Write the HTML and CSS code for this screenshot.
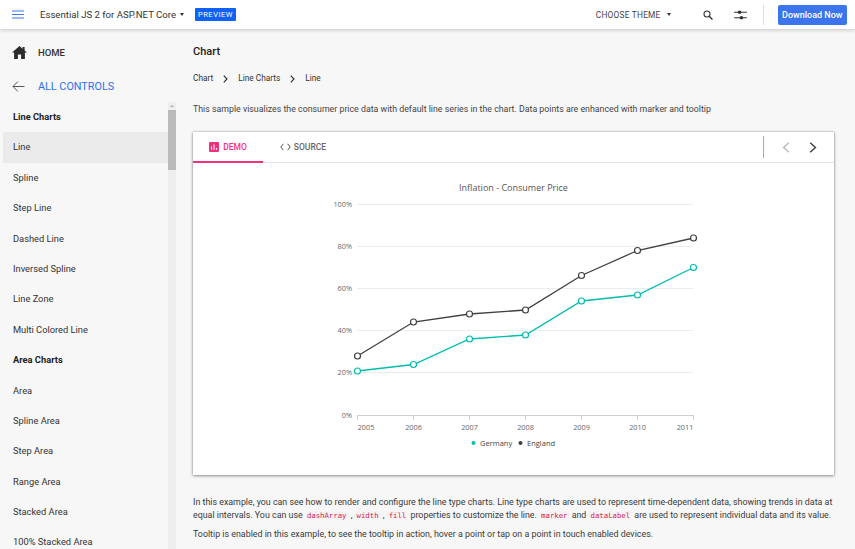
FILE: index.html
```html
<!DOCTYPE html>
<html lang="en">
  <head>
    <meta charset="UTF-8" />
    <title>Chart - Line</title>
    <link rel="stylesheet" href="styles.css">
  </head>
  <body>
    <header class="topbar">
      <svg class="burger" width="12" height="9" viewBox="0 0 12 9"><path d="M0 1h12M0 4.5h12M0 8h12" stroke="#3c78ef" stroke-width="1.2"/></svg>
      <span class="product">Essential JS 2 for ASP.NET Core</span>
      <span class="caret"></span>
      <span class="preview">PREVIEW</span>
      <span class="theme">CHOOSE THEME</span>
      <span class="caret theme-caret"></span>
      <svg class="search" width="10" height="10" viewBox="0 0 11 11"><circle cx="4.4" cy="4.4" r="3.3" fill="none" stroke="#333" stroke-width="1.2"/><path d="M6.8 6.8L10.4 10.4" stroke="#333" stroke-width="1.5"/></svg>
      <svg class="sliders" width="13" height="10" viewBox="0 0 14 11"><path d="M0 2.5h14M0 8.5h14" stroke="#333" stroke-width="1.2"/><circle cx="6" cy="2.5" r="2" fill="#333"/><circle cx="8" cy="8.5" r="2" fill="#333"/></svg>
      <span class="divider"></span>
      <a class="download">Download Now</a>
    </header>

    <div class="page">
      <aside class="sidebar">
        <div class="home">
          <svg width="15" height="13" viewBox="0 0 15 13"><path d="M7.5 0L0 6.6h2.1V13h3.8V8.6h3.2V13h3.8V6.6H15L12.6 4.4V1h-2v1.7z" fill="#2b2b2b"/></svg>
          <span>HOME</span>
        </div>
        <div class="back">
          <svg width="13" height="11" viewBox="0 0 13 11"><path d="M12.5 5.5H1M5.8 .6L1 5.5l4.8 4.9" fill="none" stroke="#555" stroke-width="1"/></svg>
          <span>ALL CONTROLS</span>
        </div>
        <div class="nav-wrap">
          <ul class="nav">
            <li class="group">Line Charts</li>
            <li class="active">Line</li>
            <li>Spline</li>
            <li>Step Line</li>
            <li>Dashed Line</li>
            <li>Inversed Spline</li>
            <li>Line Zone</li>
            <li>Multi Colored Line</li>
            <li class="group">Area Charts</li>
            <li>Area</li>
            <li>Spline Area</li>
            <li>Step Area</li>
            <li>Range Area</li>
            <li>Stacked Area</li>
            <li>100% Stacked Area</li>
          </ul>
          <div class="scroll"><span class="thumb"></span></div>
        </div>
      </aside>

      <main class="content">
        <h1>Chart</h1>
        <div class="crumbs">
          <span>Chart</span>
          <svg width="5" height="8" viewBox="0 0 5 8"><path d="M.8.6L4 4 .8 7.4" fill="none" stroke="#333" stroke-width="1.2"/></svg>
          <span>Line Charts</span>
          <svg width="5" height="8" viewBox="0 0 5 8"><path d="M.8.6L4 4 .8 7.4" fill="none" stroke="#333" stroke-width="1.2"/></svg>
          <span>Line</span>
        </div>
        <p class="intro">This sample visualizes the consumer price data with default line series in the chart. Data points are enhanced with marker and tooltip</p>

        <section class="card">
          <div class="tabs">
            <div class="tab tab-active">
              <svg width="10" height="10" viewBox="0 0 10 10"><rect width="10" height="10" rx="1" fill="#f5307a"/><path d="M2.5 4.5v3.2M5 2.5v5.2M7.5 6v1.7" stroke="#fff" stroke-width="1.1"/></svg>
              <span>DEMO</span>
            </div>
            <div class="tab tab-source">
              <svg width="11" height="8" viewBox="0 0 11 8"><path d="M3.4.8L.8 4l2.6 3.2M7.6.8L10.2 4 7.6 7.2" fill="none" stroke="#555" stroke-width="1"/></svg>
              <span>SOURCE</span>
            </div>
            <div class="pager">
              <svg width="8" height="11" viewBox="0 0 8 11"><path d="M6.8.8L1.6 5.5l5.2 4.7" fill="none" stroke="#bdbdbd" stroke-width="1.5"/></svg>
              <svg width="8" height="11" viewBox="0 0 8 11"><path d="M1.2.8l5.2 4.7-5.2 4.7" fill="none" stroke="#444" stroke-width="1.5"/></svg>
            </div>
          </div>
          <svg class="chart" width="641" height="312" viewBox="193 163 641 312">
            <text class="chart-title" x="513.500" y="191" text-anchor="middle">Inflation - Consumer Price</text>
            <g class="grid">
              <path d="M357 204.500h336M357 246.500h336M357 288.500h336M357 330.500h336M357 372.500h336"/>
            </g>
            <path class="axis" d="M357 415.500h336M357.500 415v5M413.500 415v5M469.500 415v5M525.500 415v5M581.500 415v5M637.500 415v5M693.500 415v5"/>
            <g class="tick" text-anchor="end">
              <text x="352" y="206.500">100%</text>
              <text x="352" y="248.500">80%</text>
              <text x="352" y="290.500">60%</text>
              <text x="352" y="333">40%</text>
              <text x="352" y="375">20%</text>
              <text x="352" y="417.500">0%</text>
            </g>
            <g class="tick" text-anchor="middle">
              <text x="366" y="430">2005</text>
              <text x="413.500" y="430">2006</text>
              <text x="469.500" y="430">2007</text>
              <text x="525.500" y="430">2008</text>
              <text x="581.500" y="430">2009</text>
              <text x="637.500" y="430">2010</text>
              <text x="685" y="430">2011</text>
            </g>
            <polyline class="england" points="357.500,356 413.500,322 469.500,314 525.500,310 581.500,275.500 637.500,250.500 693.500,238"/>
            <polyline class="germany" points="357.500,371 413.500,364.500 469.500,339 525.500,335 581.500,301 637.500,295 693.500,267.500"/>
            <g class="dots-england">
              <circle cx="357.500" cy="356" r="3"/><circle cx="413.500" cy="322" r="3"/><circle cx="469.500" cy="314" r="3"/><circle cx="525.500" cy="310" r="3"/><circle cx="581.500" cy="275.500" r="3"/><circle cx="637.500" cy="250.500" r="3"/><circle cx="693.500" cy="238" r="3"/>
            </g>
            <g class="dots-germany">
              <circle cx="357.500" cy="371" r="3"/><circle cx="413.500" cy="364.500" r="3"/><circle cx="469.500" cy="339" r="3"/><circle cx="525.500" cy="335" r="3"/><circle cx="581.500" cy="301" r="3"/><circle cx="637.500" cy="295" r="3"/><circle cx="693.500" cy="267.500" r="3"/>
            </g>
            <circle cx="473.500" cy="443" r="2" fill="#00bdae"/>
            <text class="legend" x="480" y="446">Germany</text>
            <circle cx="520.500" cy="443" r="2" fill="#404041"/>
            <text class="legend" x="527" y="446">England</text>
          </svg>
        </section>

        <div class="desc">
          <p>In this example, you can see how to render and configure the line type charts. Line type charts are used to represent time-dependent data, showing trends in data at<br>equal intervals. You can use <code>dashArray</code> , <code>width</code> , <code>fill</code> properties to customize the line. <code>marker</code> and <code>dataLabel</code> are used to represent individual data and its value.</p>
          <p>Tooltip is enabled in this example, to see the tooltip in action, hover a point or tap on a point in touch enabled devices.</p>
        </div>
      </main>
    </div>
  </body>
</html>
```

FILE: styles.css
```css
* {
  box-sizing: border-box;
}

html, body {
  margin: 0;
  height: 549px;
  overflow: hidden;
}

body {
  background: #f7f7f7;
  font-family: Roboto, "Liberation Sans", sans-serif;
  color: #333;
  font-size: 9px;
}

.topbar {
  position: relative;
  z-index: 2;
  height: 29px;
  background: #fff;
  box-shadow: 0 1px 4px rgba(0, 0, 0, .2);
  display: flex;
  align-items: center;
  padding: 0 8px 0 12px;
}

.burger {
  margin-right: 16px;
}

.product {
  font-size: 9.600px;
  color: #333;
}

.caret {
  width: 0;
  height: 0;
  border-left: 2.5px solid transparent;
  border-right: 2.5px solid transparent;
  border-top: 3px solid #333;
  margin-left: 4px;
}

.preview {
  margin-left: 11px;
  background: #0f62f5;
  color: #fff;
  font-size: 7.500px;
  letter-spacing: .5px;
  padding: 0 3px;
  height: 13px;
  line-height: 13px;
  border-radius: 1px;
}

.theme {
  margin-left: auto;
  font-size: 8.300px;
  letter-spacing: .25px;
  color: #444;
}

.theme-caret {
  margin-left: 6px;
}

.search {
  margin-left: 32px;
}

.sliders {
  margin-left: 21px;
}

.divider {
  width: 1px;
  height: 20px;
  background: #ddd;
  margin-left: 16px;
}

.download {
  margin-left: 14px;
  background: #3b74ec;
  color: #fff;
  font-size: 9px;
  font-weight: 500;
  height: 20px;
  line-height: 20px;
  padding: 0 4.500px;
  border-radius: 2px;
}

.page {
  display: flex;
  height: 520px;
}

.sidebar {
  width: 176px;
  flex: none;
  overflow: hidden;
}

.home {
  display: flex;
  align-items: center;
  gap: 11px;
  padding: 4px 0 0 12px;
  height: 42px;
  font-size: 9.500px;
  font-weight: 500;
  color: #333;
}

.back {
  display: flex;
  align-items: center;
  gap: 13px;
  padding-left: 12px;
  height: 31px;
  font-size: 10.800px;
  color: #2f6ff0;
}

.nav-wrap {
  display: flex;
}

.nav {
  list-style: none;
  margin: 0 0 0 3px;
  padding: 0;
  width: 165px;
}

.nav li {
  height: 30.4px;
  line-height: 30.4px;
  padding-left: 10px;
  font-size: 9.300px;
  color: #333;
}

.nav li.group {
  font-weight: 700;
  color: #222;
}

.nav li.active {
  background: #ebebeb;
}

.scroll {
  position: relative;
  width: 8px;
  height: 450px;
  background: #eeeeee;
  padding-top: 8px;
}

.scroll::before {
  content: "";
  position: absolute;
  top: 3px;
  left: 2px;
  width: 0;
  height: 0;
  border-left: 2px solid transparent;
  border-right: 2px solid transparent;
  border-bottom: 2px solid #aaa;
}

.thumb {
  display: block;
  height: 60px;
  background: #bababa;
}

.content {
  flex: 1;
  padding: 16px 21px 0 17px;
}

h1 {
  margin: 0;
  font-size: 11px;
  font-weight: 500;
  line-height: 14px;
  color: #222;
}

.crumbs {
  display: flex;
  align-items: center;
  gap: 10px;
  margin-top: 14px;
  font-size: 8.300px;
  line-height: 11px;
}

.intro {
  margin: 19px 0 0;
  font-size: 8.800px;
  line-height: 12px;
  color: #444;
  white-space: nowrap;
}

.card {
  margin-top: 17px;
  width: 641px;
  height: 343px;
  background: #fff;
  box-shadow: 0 0 2px rgba(0, 0, 0, .3), 0 1px 3px rgba(0, 0, 0, .35);
}

.tabs {
  display: flex;
  height: 31px;
  border-bottom: 1px solid #e3e3e3;
}

.tab {
  width: 70px;
  display: flex;
  align-items: center;
  justify-content: center;
  gap: 4px;
  font-size: 8.500px;
  font-weight: 500;
  color: #666;
  height: 31px;
  padding-top: 1px;
  border-bottom: 2px solid transparent;
}

.tab-active {
  color: #f5307a;
  border-bottom-color: #f5307a;
}

.tab-source {
  width: 64px;
  gap: 3px;
  margin-left: 8px;
}

.pager {
  margin: 4px 0 0 auto;
  width: 71px;
  height: 22px;
  border-left: 1px solid #aaa;
  display: flex;
  align-items: center;
  gap: 19px;
  padding: 0 0 0 18px;
}

.chart {
  display: block;
  font-family: "Open Sans", "Noto Sans", sans-serif;
}

.chart-title {
  font-size: 9px;
  fill: #555;
}

.grid path {
  stroke: #ededed;
  stroke-width: 1;
  fill: none;
}

.axis {
  stroke: #d0d0d0;
  stroke-width: 1;
  fill: none;
}

.tick text {
  font-size: 7.300px;
  fill: #666;
}

.england, .germany {
  fill: none;
  stroke-width: 1.3;
}

.england {
  stroke: #404041;
}

.germany {
  stroke: #00bdae;
}

.dots-england circle {
  fill: #fff;
  stroke: #404041;
  stroke-width: 1.2;
}

.dots-germany circle {
  fill: #fff;
  stroke: #00bdae;
  stroke-width: 1.2;
}

.legend {
  font-size: 7.500px;
  fill: #444;
}

.desc {
  margin-top: 21px;
  font-size: 8.870px;
  line-height: 12.500px;
  color: #3a3a3a;
  white-space: nowrap;
}

.desc p {
  margin: 0 0 6px;
}

code {
  font-family: "DejaVu Sans Mono", monospace;
  font-size: 7.300px;
  color: #c7254e;
  background: #f9f2f4;
  padding: 0 2px;
  border-radius: 2px;
}
```
